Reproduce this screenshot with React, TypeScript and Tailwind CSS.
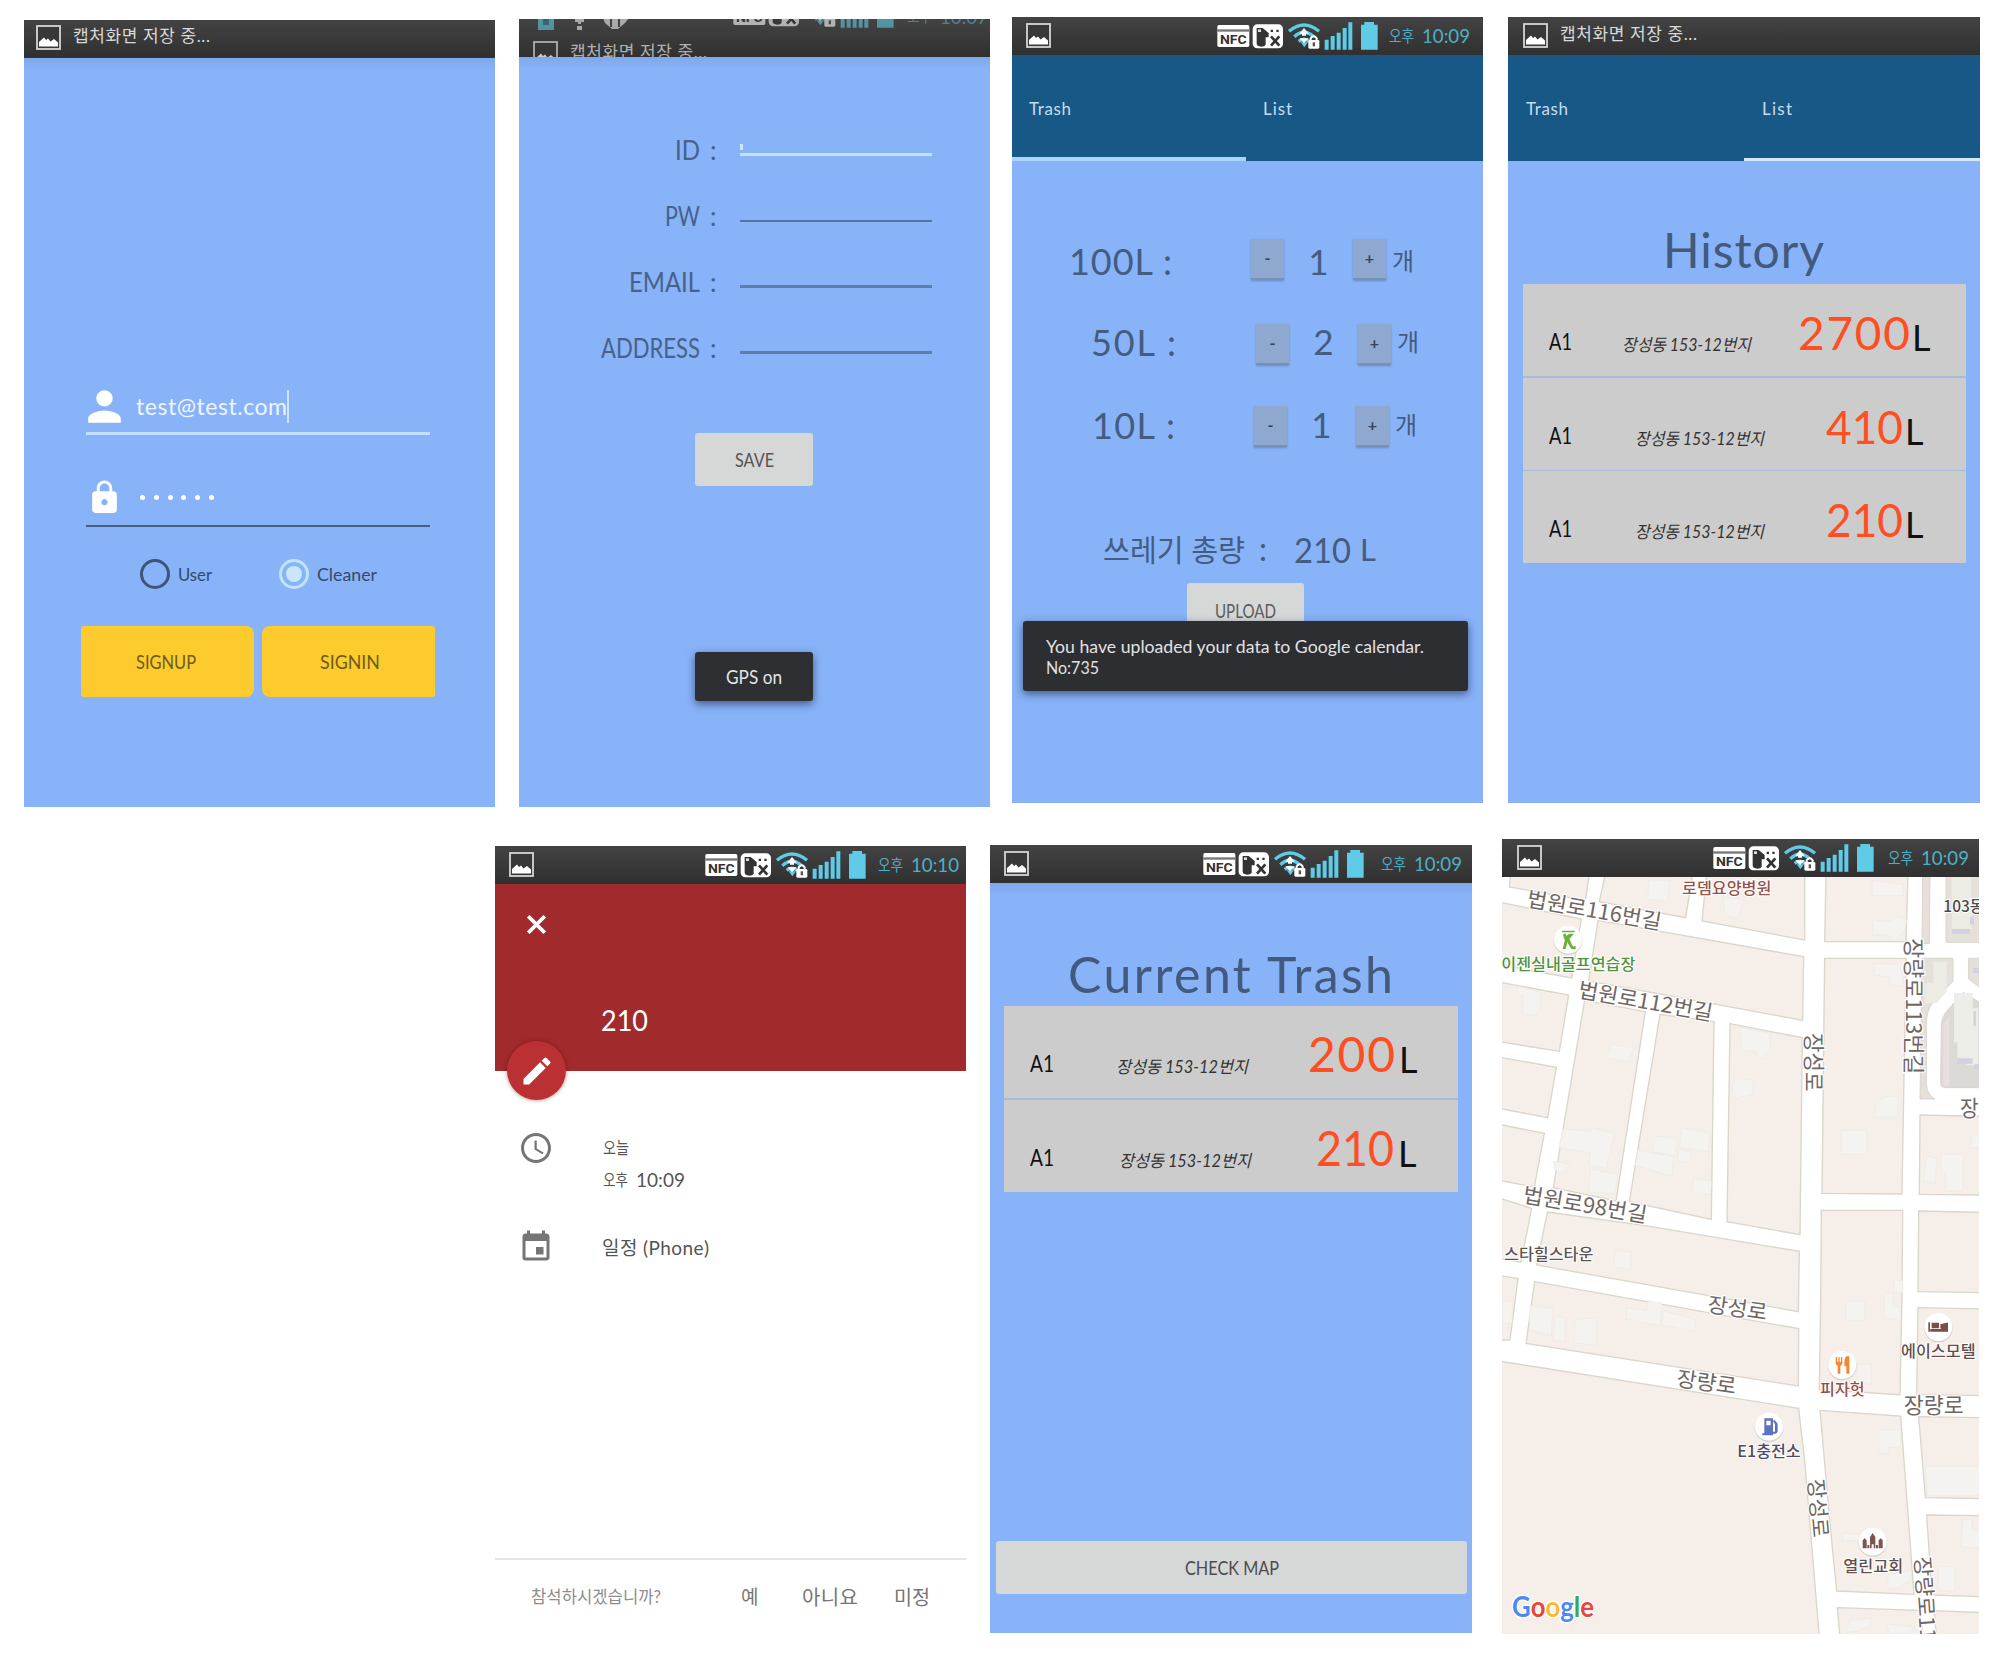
import { useLayoutEffect, useRef } from "react";
import type { ReactNode } from "react";
import { MdAccessTime, MdEdit, MdEvent, MdLock, MdPerson } from "react-icons/md";

/** One line of text that fills its box: spaced out when short, condensed when long. */
function Fit({ children, className = "" }: { children: string; className?: string }) {
  const box = useRef<HTMLDivElement>(null);
  const line = useRef<HTMLSpanElement>(null);
  useLayoutEffect(() => {
    if (!box.current || !line.current) return;
    const style = line.current.style;
    style.letterSpacing = "0px";
    style.transform = "none";
    const room = box.current.clientWidth;
    const natural = line.current.getBoundingClientRect().width;
    if (natural > room) {
      style.transform = `scaleX(${room / natural})`;
    } else if (children.length > 1) {
      style.letterSpacing = `${(room - natural) / (children.length - 1)}px`;
    }
  }, [children]);
  return (
    <div ref={box} className={`shrink-0 leading-none whitespace-nowrap ${className}`}>
      <span ref={line} className="inline-block origin-left">{children}</span>
    </div>
  );
}

function PictureIcon() {
  return (
    <svg viewBox="0 0 25 25" className="h-[25px] w-[25px] shrink-0">
      <rect x="1" y="1" width="23" height="23" fill="#383838" stroke="#d6d6d6" strokeWidth="1.8" />
      <path d="M3 21.5V17l5-4.5 2 2.5 2-1.5 2.500 3 3.500-2.500 4 3.500v4z" fill="#fff" />
    </svg>
  );
}

function SystemIcons() {
  return (
    <svg viewBox="650 60 486 96" className="h-8 w-[162px] shrink-0">
      <rect x="651" y="75" width="96" height="66" rx="5" fill="#fff" />
      <rect x="651" y="88" width="96" height="7" fill="#777" />
      <text x="659" y="131" fontSize="39" fontWeight="700" textLength="80" lengthAdjust="spacingAndGlyphs" fill="#333" fontFamily="Roboto, sans-serif">NFC</text>
      <rect x="757" y="73" width="91" height="72" rx="14" fill="#fff" />
      <path d="M769 84h18l18 15v13h-9v22q-3 6-13 6-14 0-14-10z" fill="#333" />
      <path d="M773 88h9v8h-9z" fill="#ddd" />
      <path d="M811 89h7v7h-7zM828 89h7v7h-7z" fill="#333" />
      <path d="M812 109l25 28M837 109l-25 28" stroke="#333" strokeWidth="8" />
      <g fill="none" stroke="#5fcbe6" strokeWidth="10">
        <path d="M866 94q45-38 90 0" />
        <path d="M882 110q29-27 58 0" />
        <path d="M895 124q16-13 32 0" />
      </g>
      <path d="M901 127h22l-11 15z" fill="#5fcbe6" />
      <path d="M911 84l14 17h-8v6h-12v-6h-8zM897 115h28l-14 15z" fill="#fff" />
      <rect x="924" y="120" width="33" height="26" rx="4" fill="#fff" />
      <path d="M931 122v-7q9-12 18 0v7" fill="none" stroke="#fff" strokeWidth="6" />
      <path d="M937 127h7v12h-7z" fill="#555" />
      <path d="M973 119h12v30h-12zM991 108h12v41h-12zM1009 98h12v51h-12zM1027 84h12v65h-12zM1044 67h12v82h-12z" fill="#5fcbe6" />
      <path d="M1092 66h29v8h11v75h-50V74h10z" fill="#5fcbe6" />
    </svg>
  );
}

function Clock({ time, className = "" }: { time: string; className?: string }) {
  return (
    <div className={`flex shrink-0 items-center text-[#4fb0c4] ${className}`}>
      <Fit className="w-[25px] text-[16px]">오후</Fit>
      <Fit className="ml-2 w-[48px] text-[19px]">{time}</Fit>
    </div>
  );
}

const BAR = "flex shrink-0 bg-linear-to-b from-[#434343] to-[#303030]";

function SavingBar({ className }: { className: string }) {
  return (
    <div className={`${BAR} ${className}`}>
      <PictureIcon />
      <Fit className="mt-0.5 ml-3 w-[137px] text-[17px] text-[#d9d9d9]">캡처화면 저장 중...</Fit>
    </div>
  );
}

function TrayBar({ time, className, iconsClass, clockClass }: { time: string; className: string; iconsClass: string; clockClass: string }) {
  return (
    <div className={`${BAR} ${className}`}>
      <div className="pt-[3px]">
        <PictureIcon />
      </div>
      <div className={iconsClass}>
        <SystemIcons />
      </div>
      <Clock time={time} className={clockClass} />
    </div>
  );
}

function BarShadow() {
  return <div className="h-3 shrink-0 bg-linear-to-b from-[#7fa8ea] to-[#88b3f8]" />;
}

function LoginScreen() {
  return (
    <section className="mt-5 flex h-[787px] w-[471px] flex-col bg-[#88b3f8]">
      <SavingBar className="h-[38px] pt-[5px] pl-3" />
      <BarShadow />
      <div className="mt-[311px] ml-[62px] flex h-[54px] w-[344px] items-center border-b-[3px] border-[#bfe1ff]">
        <div className="flex w-[37px] shrink-0 justify-center">
          <MdPerson className="h-[49px] w-[49px] shrink-0 text-white" />
        </div>
        <Fit className="ml-[13px] w-[151px] text-[23px] text-[#eef5ff]">test@test.com</Fit>
        <div className="h-[33px] w-[2px] bg-[#c9e7ff]" />
      </div>
      <div className="mt-[38px] ml-[62px] flex h-[54px] w-[344px] items-center border-b-2 border-[#46607f] pb-1">
        <div className="flex w-[37px] shrink-0 justify-center">
          <MdLock className="h-[39px] w-[39px] text-white" />
        </div>
        <div className="ml-[17px] flex gap-[8.800px]">
          {[0, 1, 2, 3, 4, 5].map((dot) => (
            <span key={dot} className="h-[5px] w-[5px] rounded-full bg-white" />
          ))}
        </div>
      </div>
      <div className="mt-8 ml-[116px] flex h-[30px] items-center text-[#334a68]">
        <span className="h-[30px] w-[30px] rounded-full border-[3px] border-[#3d5675]" />
        <Fit className="ml-2 w-[34px] text-[18px]">User</Fit>
        <span className="ml-[67px] flex h-[30px] w-[30px] items-center justify-center rounded-full border-[3px] border-[#c2e3ff]">
          <span className="h-4 w-4 rounded-full bg-[#c9e8ff]" />
        </span>
        <Fit className="ml-2 w-[60px] text-[18px]">Cleaner</Fit>
      </div>
      <div className="mt-[37px] ml-[57px] flex gap-2 text-[#6e5b1b]">
        <button className="flex h-[71px] w-[173px] items-center justify-center rounded-l-[3px] rounded-r-lg bg-[#fdcb2e]">
          <Fit className="mr-1 w-[60px] text-[19px]">SIGNUP</Fit>
        </button>
        <button className="flex h-[71px] w-[173px] items-center justify-center rounded-l-lg rounded-r-[3px] bg-[#fdcb2e]">
          <Fit className="ml-0.5 w-[60px] text-[19px]">SIGNIN</Fit>
        </button>
      </div>
    </section>
  );
}

function FormRow({ label, children }: { label: ReactNode; children: ReactNode }) {
  return (
    <div className="flex h-[66px] items-center">
      <div className="flex w-[181px] justify-end">{label}</div>
      <div className="ml-[10px] w-[7px] text-[26px] leading-none">:</div>
      {children}
    </div>
  );
}

function SignupScreen() {
  return (
    <section className="mt-[19px] ml-6 flex h-[788px] w-[471px] flex-col bg-[#88b3f8]">
      <div className="h-[38px] shrink-0 overflow-hidden bg-linear-to-b from-[#434343] to-[#303030]">
        <div className="-mt-[21px] flex h-[38px] pl-[19px] opacity-60">
          <svg viewBox="0 0 93 32" className="h-8 w-[93px] shrink-0">
            <path d="M0 12h16v20H0z" fill="#5fcbe6" />
            <path d="M5 19h6v8H5z" fill="#2f7f90" />
            <path d="M40 14h3v12h-3zM37 21h9v3h-9zM39 28h5v4h-5z" fill="#eee" />
            <path d="M65 20h26l-4 5-7 6h-6l-7-6z" fill="#eee" />
            <path d="M73 20v9M81 20v9" stroke="#444" strokeWidth="2" />
          </svg>
          <div className="ml-[102px] flex">
            <SystemIcons />
            <Clock time="10:07" className="ml-3 h-[36px]" />
          </div>
        </div>
        <div className="flex h-[38px] pt-[5px] pl-[14px] opacity-75">
          <PictureIcon />
          <Fit className="mt-0.5 ml-3 w-[137px] text-[17px] text-[#d9d9d9]">캡처화면 저장 중...</Fit>
        </div>
      </div>
      <BarShadow />
      <div className="mt-[48px] flex flex-col text-[#46628a]">
        <FormRow label={<Fit className="w-[25px] text-[26px]">ID</Fit>}>
          <div className="ml-[23px] h-3 w-[192px] border-b-[3px] border-[#c2e3ff]">
            <div className="h-[6px] w-[3px] bg-[#c9e8ff]" />
          </div>
        </FormRow>
        <FormRow label={<Fit className="w-[35px] text-[26px]">PW</Fit>}>
          <div className="ml-[23px] h-3 w-[192px] border-b-2 border-[#55749f]" />
        </FormRow>
        <FormRow label={<Fit className="w-[71px] text-[26px]">EMAIL</Fit>}>
          <div className="ml-[23px] h-3 w-[192px] border-b-[3px] border-[#5d7eab]" />
        </FormRow>
        <FormRow label={<Fit className="w-[99px] text-[26px]">ADDRESS</Fit>}>
          <div className="ml-[23px] h-3 w-[192px] border-b-[3px] border-[#5d7eab]" />
        </FormRow>
      </div>
      <button className="mt-[52px] ml-[176px] flex h-[53px] w-[118px] items-center justify-center rounded-[3px] bg-[#d6d7d7] text-[#555]">
        <Fit className="w-[39px] text-[19px]">SAVE</Fit>
      </button>
      <div className="mt-[166px] ml-[176px] flex h-[49px] w-[118px] items-center justify-center rounded-[3px] bg-[#2d2f33] text-[#e4e4e4] shadow-[0_3px_8px_rgba(20,30,60,0.6)]">
        <Fit className="w-[56px] text-[19px]">GPS on</Fit>
      </div>
    </section>
  );
}

function StepButton({ sign }: { sign: string }) {
  return (
    <button className="flex h-[41px] w-[33px] shrink-0 items-center justify-center border-b-2 border-[#7790b6] bg-[#8fa8cf] pb-0.5 text-[16px] leading-none font-bold text-[#33445f] shadow-[0_1px_2px_rgba(60,80,120,0.4)]">
      {sign}
    </button>
  );
}

function CountRow({ label, labelClass, count, className, nudge }: { label: string; labelClass: string; count: string; className: string; nudge: string }) {
  return (
    <div className={`flex h-[41px] items-center text-[#435c7f] ${className}`}>
      <Fit className={`text-[36px] ${labelClass} ${nudge}`}>{label}</Fit>
      <StepButton sign="-" />
      <div className={`w-[69px] text-center text-[35px] leading-none ${nudge}`}>{count}</div>
      <StepButton sign="+" />
      <Fit className={`ml-[6px] w-[27px] text-[24px] ${nudge}`}>개</Fit>
    </div>
  );
}

function UploadScreen() {
  return (
    <section className="mt-[17px] ml-[22px] flex h-[786px] w-[471px] flex-col bg-[#88b3f8]">
      <TrayBar time="10:09" className="h-[38px] pt-[3px] pl-[14px]" iconsClass="ml-[166px]" clockClass="ml-[10px] h-[31px]" />
      <div className="flex h-[106px] shrink-0 bg-[#185886] text-[#c5dcee]">
        <div className="w-[234px] border-b-4 border-[#abd3fb] pt-[45px] pl-[17px]">
          <Fit className="w-[42px] text-[17px]">Trash</Fit>
        </div>
        <div className="pt-[45px] pl-[17px]">
          <Fit className="w-[29px] text-[17px]">List</Fit>
        </div>
      </div>
      <CountRow className="mt-[78px] pl-[57px]" count="1" label="100L :" labelClass="w-[103px] mr-[79px]" nudge="pt-[3px]" />
      <CountRow className="mt-[44px] pl-[79px]" count="2" label="50L :" labelClass="w-[85px] mr-[80px]" nudge="pb-[6px]" />
      <CountRow className="mt-[41px] pl-[80px]" count="1" label="10L :" labelClass="w-[83px] mr-[79px]" nudge="pb-[4px]" />
      <div className="mt-[80px] flex h-[44px] items-center pl-[91px] text-[#435c7f]">
        <Fit className="w-[142px] text-[30px]">쓰레기 총량</Fit>
        <div className="ml-[14px] text-[32px] leading-none">:</div>
        <Fit className="ml-[27px] w-[57px] text-[35px]">210</Fit>
        <Fit className="ml-[9px] w-[18px] text-[31px]">L</Fit>
      </div>
      <button className="mt-[12px] ml-[175px] flex h-[38px] w-[117px] shrink-0 justify-center rounded-t-[3px] bg-[#d6d7d7] pt-[18px] text-[#5c5c5c]">
        <Fit className="w-[61px] text-[19px]">UPLOAD</Fit>
      </button>
      <div className="z-10 ml-[11px] h-[70px] w-[445px] rounded-[3px] bg-[#2c2e32] pt-[16px] pl-[23px] text-[#e2e2e2] shadow-[0_3px_8px_rgba(20,30,60,0.6)]">
        <Fit className="w-[378px] text-[18px]">You have uploaded your data to Google calendar.</Fit>
        <Fit className="mt-[3px] w-[53px] text-[18px]">No:735</Fit>
      </div>
    </section>
  );
}

function TrashRow({ addressClass, amount, amountClass, unitClass, large = false }: { addressClass: string; amount: string; amountClass: string; unitClass: string; large?: boolean }) {
  return (
    <div className="flex h-[92px] items-end bg-[#cccccc] pl-[26px] text-[#111]">
      <Fit className={large ? "mb-[23px] w-[24px] text-[24px]" : "mb-[23px] w-[23px] text-[23px]"}>A1</Fit>
      <Fit className={`mb-[23px] text-[17px] text-[#333] italic ${addressClass}`}>장성동 153-12번지</Fit>
      <Fit className={`text-[#ff4f22] ${large ? "mb-[20px]" : "mb-[20px]"} ${amountClass}`}>{amount}</Fit>
      <Fit className={`mb-[21px] text-[36px] ${unitClass}`}>L</Fit>
    </div>
  );
}

function HistoryScreen() {
  return (
    <section className="mt-[17px] ml-[25px] flex h-[786px] w-[472px] flex-col bg-[#88b3f8]">
      <SavingBar className="h-[38px] pt-[6px] pl-[15px]" />
      <div className="flex h-[106px] shrink-0 bg-[#185886] text-[#c5dcee]">
        <div className="w-[236px] pt-[45px] pl-[18px]">
          <Fit className="w-[42px] text-[17px]">Trash</Fit>
        </div>
        <div className="w-[236px] border-b-[3px] border-[#d3e9ff] pt-[45px] pl-[18px]">
          <Fit className="w-[30px] text-[17px]">List</Fit>
        </div>
      </div>
      <Fit className="mt-[65px] ml-[155px] h-[58px] w-[161px] text-[48px] text-[#415a7d]">History</Fit>
      <div className="ml-[15px] flex w-[443px] flex-col gap-[1.500px] bg-[#a9bbdd]">
        <TrashRow addressClass="ml-[50px] w-[129px]" amount="2700" amountClass="ml-[47px] w-[112px] text-[46px]" unitClass="ml-0.5 w-[20px]" />
        <TrashRow addressClass="ml-[63px] w-[129px]" amount="410" amountClass="ml-[62px] w-[77px] text-[46px]" unitClass="ml-0.5 w-[20px]" />
        <TrashRow addressClass="ml-[63px] w-[129px]" amount="210" amountClass="ml-[62px] w-[77px] text-[46px]" unitClass="ml-0.5 w-[20px]" />
      </div>
    </section>
  );
}

function EventScreen() {
  return (
    <section className="mt-[26px] flex h-[787px] w-[471px] flex-col bg-white">
      <TrayBar time="10:10" className="h-[38px] pt-[3px] pl-[14px]" iconsClass="ml-[171px]" clockClass="ml-[11px] h-[31px]" />
      <div className="relative h-[187px] shrink-0 bg-[#a12a2c] pt-6 pl-[25px] text-white">
        <svg viewBox="0 0 24 24" className="h-[33px] w-[33px]">
          <path d="M6 6l12 12M18 6L6 18" stroke="#fff" strokeWidth="2.800" />
        </svg>
        <Fit className="mt-[64px] ml-[81px] w-[47px] text-[29px]">210</Fit>
        <button className="absolute -bottom-[29px] left-[12px] flex h-[59px] w-[59px] items-center justify-center rounded-full bg-[#bb3033] shadow-[0_0_4px_rgba(90,10,10,0.5)]">
          <MdEdit className="h-9 w-9" />
        </button>
      </div>
      <div className="mt-[59px] flex pl-[23px] text-[#555]">
        <MdAccessTime className="h-9 w-9 text-[#757575]" />
        <div className="ml-[49px] pt-[9px]">
          <Fit className="w-[26px] text-[17px]">오늘</Fit>
          <div className="mt-[14px] flex items-center">
            <Fit className="w-[25px] text-[16px]">오후</Fit>
            <Fit className="ml-2 w-[49px] text-[19px]">10:09</Fit>
          </div>
        </div>
      </div>
      <div className="mt-[40px] flex items-center pl-[23px] text-[#555]">
        <MdEvent className="h-9 w-9 text-[#757575]" />
        <Fit className="ml-[48px] w-[107px] text-[19px]">일정 (Phone)</Fit>
      </div>
      <div className="mt-auto flex h-[75px] items-center border-t-2 border-[#e6e6e6] pl-9 text-[#757575]">
        <Fit className="w-[130px] text-[17px] text-[#8d8d8d]">참석하시겠습니까?</Fit>
        <Fit className="ml-[80px] w-[19px] text-[19px]">예</Fit>
        <Fit className="ml-[42px] w-[56px] text-[20px]">아니요</Fit>
        <Fit className="ml-[36px] w-[36px] text-[20px]">미정</Fit>
      </div>
    </section>
  );
}

function CurrentScreen() {
  return (
    <section className="mt-[25px] ml-6 flex h-[788px] w-[482px] flex-col bg-[#88b3f8]">
      <TrayBar time="10:09" className="h-[38px] pt-[3px] pl-[14px]" iconsClass="ml-[174px]" clockClass="ml-[16px] h-[31px]" />
      <BarShadow />
      <Fit className="mt-[54px] ml-[78px] h-[57px] w-[325px] text-[50px] text-[#415a7d]">Current Trash</Fit>
      <div className="ml-[14px] flex w-[454px] flex-col gap-[2px] bg-[#a9bbdd]">
        <TrashRow large addressClass="ml-[62px] w-[132px]" amount="200" amountClass="ml-[60px] w-[87px] text-[48px]" unitClass="ml-1 w-[20px]" />
        <TrashRow large addressClass="ml-[65px] w-[132px]" amount="210" amountClass="ml-[65px] w-[78px] text-[48px]" unitClass="ml-1 w-[20px]" />
      </div>
      <button className="mt-auto mb-[39px] ml-[6px] flex h-[53px] w-[471px] items-center justify-center rounded-[3px] bg-[#d6d7d7] text-[#4c4c4c]">
        <Fit className="w-[94px] text-[19px]">CHECK MAP</Fit>
      </button>
    </section>
  );
}

const BLOCKS = [
  "62,130 298,130 286,208 58,168 60,150",
  "346,130 608,130 587,260 328,212",
  "650,130 944,130 944,327 636,270",
  "1008,130 1254,130 1248,332 1004,332",
  "26,213 274,264 245,441 26,401",
  "324,268 941,377 938,568 296,450",
  "26,453 236,492 208,661 26,632",
  "26,678 199,709 173,860 26,832",
  "26,880 163,907 133,1068 26,1048",
  "26,1101 125,1132 93,1294 26,1282",
  "284,508 466,542 378,1110 190,1070",
  "510,550 672,572 664,1165 418,1112",
  "720,578 937,620 930,1211 711,1172",
  "1004,382 1248,382 1236,1089 996,1087",
  "1290,852 1478,856 1478,1092 1288,1090",
  "994,1138 1238,1138 1236,1400 1230,1691 988,1676 992,1400",
  "1286,1140 1478,1144 1478,1385 1284,1382",
  "1284,1430 1478,1434 1478,1694 1280,1690",
  "172,1143 466,1184 928,1261 925,1442 140,1302",
  "134,1352 926,1493 925,1665 108,1537",
  "26,1333 84,1343 60,1527 26,1527",
  "26,1590 926,1732 945,1900 988,2420 26,2420",
  "990,1738 1232,1755 1272,2290 1040,2280 1020,2080",
  "1286,1757 1478,1760 1478,2003 1306,2000",
  "1310,2052 1478,2054 1478,2297 1326,2292",
  "1042,2330 1290,2338 1300,2420 1050,2420",
  "1332,2339 1478,2345 1478,2420 1340,2420",
];

const BUILDINGS = [
  "478,148 540,148 530,212 472,204",
  "700,200 762,206 752,240 738,262 704,248",
  "1146,148 1240,160 1238,194 1146,194",
  "1150,266 1190,272 1222,258 1250,266 1244,300 1214,330 1190,312 1146,312",
  "82,465 152,484 152,520 138,554 98,548 98,492 82,490",
  "364,640 430,650 416,692 350,682",
  "748,590 842,606 838,662 822,682 804,680 800,662 758,658",
  "734,742 790,748 788,790 736,802 726,770",
  "1152,398 1238,400 1238,466 1200,460 1198,438 1152,432",
  "1180,796 1224,796 1224,858 1150,858 1160,820",
  "1054,898 1130,898 1130,970 1054,970",
  "220,894 300,900 306,890 374,908 348,1012 298,1002 302,966 206,950",
  "192,990 238,1000 230,1016 216,1026 192,1014",
  "302,1014 384,1030 374,1088 296,1082",
  "496,916 564,922 554,974 490,962",
  "576,890 658,906 656,962 568,948",
  "444,958 550,976 546,1036 436,1002",
  "566,956 602,962 598,994 564,990",
  "612,1042 664,1050 662,1090 606,1084",
  "1310,974 1340,984 1336,1056 1300,1050",
  "1354,970 1420,970 1418,1080 1368,1080 1366,1022 1354,1018",
  "1446,910 1470,910 1470,950 1440,950",
  "378,1258 424,1264 420,1316 370,1306",
  "36,1410 68,1410 66,1476 36,1476",
  "120,1424 188,1432 184,1514 118,1496",
  "196,1456 226,1462 226,1532 188,1526",
  "256,1466 320,1460 318,1542 252,1536",
  "410,1430 470,1440 474,1410 516,1416 510,1484 408,1464",
  "522,1440 618,1466 614,1500 516,1482",
  "1068,1410 1124,1410 1124,1468 1068,1468",
  "1184,1386 1210,1390 1210,1424 1232,1430 1230,1468 1182,1460",
  "1212,1346 1238,1350 1238,1386 1212,1384",
  "1104,1600 1144,1600 1144,1660 1100,1656",
  "1166,1798 1232,1796 1232,1846 1196,1850 1194,1868 1166,1868",
  "1306,1906 1470,1906 1470,1994 1312,1994",
  "1418,2066 1446,2066 1446,2096 1470,2100 1470,2150 1414,2148",
  "1344,2206 1396,2208 1394,2282 1344,2276",
  "1058,2106 1120,2112 1118,2130 1058,2128",
  "1196,2230 1264,2220 1258,2250 1214,2274 1190,2268",
  "1078,2370 1144,2360 1138,2386 1100,2400 1068,2404",
  "1190,2378 1268,2388 1264,2410 1198,2410",
];

function RoadName({ at, turn, length, children }: { at: [number, number]; turn: number; length: number; children: string }) {
  return (
    <text transform={`translate(${at[0]} ${at[1]}) rotate(${turn})`} fontSize="64" textLength={length} lengthAdjust="spacingAndGlyphs" fill="#6f6662" stroke="#fff" strokeWidth="7" paintOrder="stroke">
      {children}
    </text>
  );
}

function PlaceName({ x, y, length, color, children }: { x: number; y: number; length: number; color: string; children: string }) {
  return (
    <text x={x} y={y} fontSize="47" fontWeight="500" textLength={length} lengthAdjust="spacingAndGlyphs" fill={color} stroke="#fff" strokeWidth="6" paintOrder="stroke">
      {children}
    </text>
  );
}

function Pin({ x, y, color, children }: { x: number; y: number; color: string; children: ReactNode }) {
  return (
    <g transform={`translate(${x} ${y})`} fill={color}>
      <circle cy="3" r="43" fill="#d9d2ca" />
      <circle r="42" fill="#fff" />
      {children}
    </g>
  );
}

function MapDrawing() {
  return (
    <svg viewBox="36 138 1431 2271" className="h-[757px] w-[477px] shrink-0" fontFamily="'Noto Sans CJK KR', sans-serif">
      <rect x="36" y="138" width="1431" height="2271" fill="#fff" />
      <g fill="#e5e1da" stroke="#d9d5cb" strokeWidth="3">
        <path d="M1298 130h22l-2 208h-22zM1368 130h110v204h-110z" />
        <path d="M1296 382h93v68l-62 66q-18 24-18 64v180q2 32 26 44h-45z" />
        <path d="M1436 382h42v94l-42-32z" />
        <path d="M1420 484l-46 52q-20 22-20 50l-2 170q0 14 14 14h112V520z" fill="#dcdad6" />
      </g>
      <path d="M1360 580l18-26v210h-18z" fill="#e8dfdf" />
      <path d="M1392 486h56v46h16v170h-34v-14h-28v-54h-10z" fill="#eeeee8" />
      <path d="M1330 392h40v90l-30 34h-36v-60h26z" fill="#ecebe4" />
      <path d="M1384 138h60v160h-58z" fill="#ecebe4" />
      <path d="M1386 294h54v14h-54zM1402 682h46v16h-46zM1450 410h18v16h-18zM1450 540h8v44h-8zM1440 258h12v22h-12zM1452 700h16v14h-16z" fill="#d3d0e0" />
      <g fill="#f6eee8" stroke="#dad6ca" strokeWidth="4">
        {BLOCKS.map((points) => (
          <polygon key={points} points={points} />
        ))}
      </g>
      <g fill="#f5f3ef" stroke="#efe9e2" strokeWidth="2">
        {BUILDINGS.map((points) => (
          <polygon key={points} points={points} />
        ))}
      </g>

      <RoadName at={[108, 225]} turn={10} length={408}>법원로116번길</RoadName>
      <RoadName at={[262, 498]} turn={10} length={408}>법원로112번길</RoadName>
      <RoadName at={[96, 1113]} turn={9.5} length={376}>법원로98번길</RoadName>
      <RoadName at={[948, 606]} turn={90} length={176}>장성로</RoadName>
      <RoadName at={[1249, 322]} turn={90} length={408}>장량로113번길</RoadName>
      <RoadName at={[1410, 854]} turn={0} length={56}>장</RoadName>
      <RoadName at={[650, 1442]} turn={8} length={180}>장성로</RoadName>
      <RoadName at={[557, 1664]} turn={8} length={180}>장량로</RoadName>
      <RoadName at={[1241, 1747]} turn={0} length={180}>장량로</RoadName>
      <RoadName at={[954, 1946]} turn={85} length={176}>장성로</RoadName>
      <RoadName at={[1274, 2178]} turn={86} length={408}>장량로113번길</RoadName>

      <PlaceName x={576} y={190} length={268} color="#96514b">로뎀요양병원</PlaceName>
      <PlaceName x={1360} y={244} length={122} color="#4a4a4a">103동</PlaceName>
      <PlaceName x={34} y={417} length={402} color="#4d933c">이젠실내골프연습장</PlaceName>
      <PlaceName x={42} y={1288} length={268} color="#5a5653">스타힐스타운</PlaceName>
      <Pin x={1345} y={1488} color="#7a4f49">
        <path d="M-30-14h5v28h-5zM-24 6h48v8h-48zM-20-13h22v17h-22zM6-8l18-5h5v27h-8l-15-10z" />
      </Pin>
      <Pin x={1057} y={1602} color="#f58634">
        <path d="M-20-24h4v14h4v-14h4v14h4v-14h4v20q-4 6-6 6v24h-8V2q-6-2-6-8zM12-26h9v52h-9V4h-6v-14q0-12 6-16z" />
      </Pin>
      <Pin x={837} y={1787} color="#5f72bf">
        <path fillRule="evenodd" d="M-14-25h26v40h6v-22l-6-10 4-4 10 12v24q-2 6-8 6h-6v5h-32v-6h6zM-8-18v14h13v-14z" />
      </Pin>
      <Pin x={1148} y={2132} color="#7f5550">
        <path d="M-30-4l6-6 6 6v24h-12zM-8-14l8-12 8 12v34H3V8h-6v12h-5zM18-4l6-6 6 6v24H18zM-16 10h6v10h-6zM10 10h6v10h-6z" />
      </Pin>
      <Pin x={234} y={326} color="#6bb03b">
        <path d="M-18-27h38v5h-38zM-14-18h8v9h-8zM-14-6l18-12h14l-14 16 14 30h-8l-12-20-5 20h-9l7-28zM14 20h9v9h-9z" />
      </Pin>
      <PlaceName x={1233} y={1578} length={224} color="#5f4e4b">에이스모텔</PlaceName>
      <PlaceName x={990} y={1692} length={134} color="#93504a">피자헛</PlaceName>
      <PlaceName x={742} y={1878} length={190} color="#4c4a68">E1충전소</PlaceName>
      <PlaceName x={1060} y={2222} length={180} color="#5f4e4b">열린교회</PlaceName>

      <text x="66" y="2358" fontSize="86" fontWeight="700" textLength="246" lengthAdjust="spacingAndGlyphs" fontFamily="Lato, sans-serif" stroke="#fff" strokeWidth="8" paintOrder="stroke">
        <tspan fill="#4a8af4">G</tspan>
        <tspan fill="#e8453c">o</tspan>
        <tspan fill="#f9bb2d">o</tspan>
        <tspan fill="#4a8af4">g</tspan>
        <tspan fill="#3aa757">l</tspan>
        <tspan fill="#e8453c">e</tspan>
      </text>
    </svg>
  );
}

function MapScreen() {
  return (
    <section className="mt-[19px] ml-[30px] flex h-[795px] w-[477px] flex-col overflow-hidden bg-white">
      <TrayBar time="10:09" className="h-[38px] pt-[3px] pl-[15px]" iconsClass="ml-[171px]" clockClass="ml-[13px] h-[31px]" />
      <MapDrawing />
    </section>
  );
}

export default function App() {
  return (
    <main className="h-[1662px] w-[2002px] overflow-hidden bg-white font-[Lato,'Noto_Sans_CJK_KR',sans-serif]">
      <div className="flex h-[820px] items-start pl-6">
        <LoginScreen />
        <SignupScreen />
        <UploadScreen />
        <HistoryScreen />
      </div>
      <div className="flex h-[842px] items-start pl-[495px]">
        <EventScreen />
        <CurrentScreen />
        <MapScreen />
      </div>
    </main>
  );
}
